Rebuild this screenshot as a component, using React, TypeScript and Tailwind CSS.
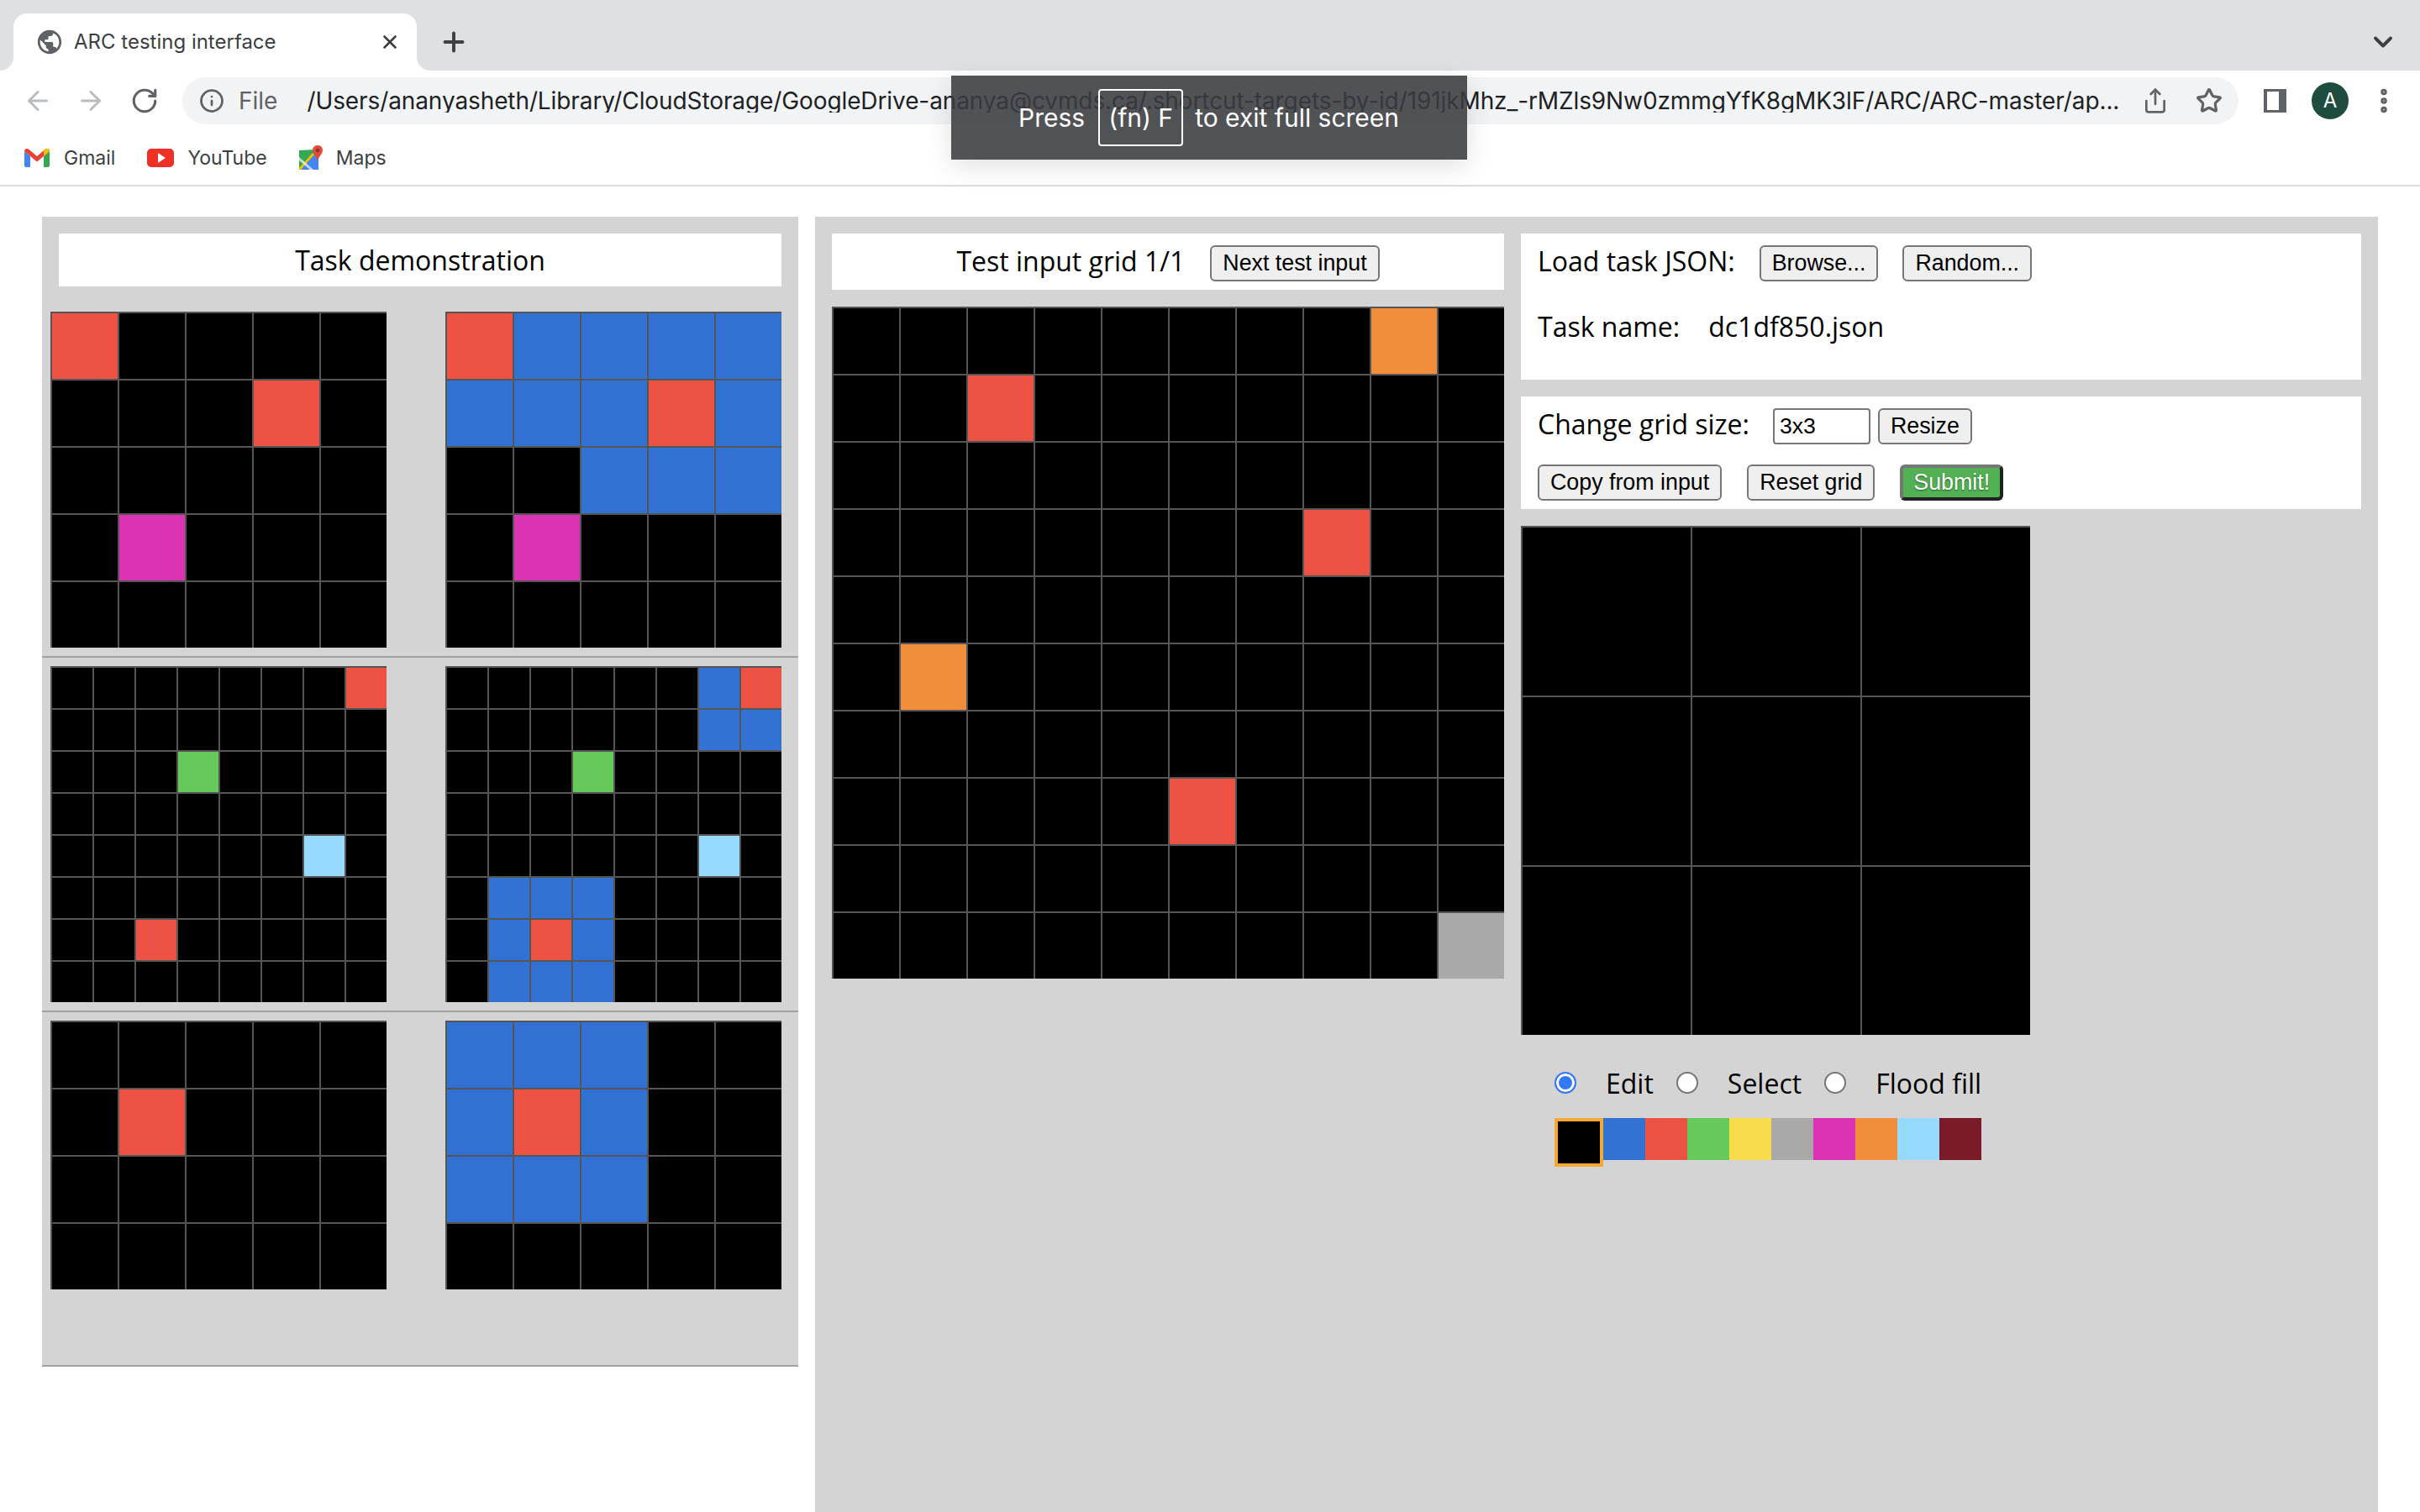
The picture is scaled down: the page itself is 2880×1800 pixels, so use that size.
import { ArrowLeft, ArrowRight, ChevronDown, EllipsisVertical, Info, Plus, RotateCw, Share, Star, X } from "lucide-react";
import { MdPublic } from "react-icons/md";

const cellColors = [
  "bg-black",
  "bg-[#3172d3]",
  "bg-[#ec5344]",
  "bg-[#66ca5a]",
  "bg-[#f9dc4c]",
  "bg-[#a9a9a9]",
  "bg-[#db33b4]",
  "bg-[#f28e3b]",
  "bg-[#96daff]",
  "bg-[#7b1b2a]"
];

const pairs = [
  {
    cols: "grid-cols-5",
    size: "h-[400px] grid-rows-5",
    input: ["20000", "00020", "00000", "06000", "00000"],
    output: ["21111", "11121", "00111", "06000", "00000"]
  },
  {
    cols: "grid-cols-8",
    size: "h-[400px] grid-rows-8",
    input: ["00000002", "00000000", "00030000", "00000000", "00000080", "00000000", "00200000", "00000000"],
    output: ["00000012", "00000011", "00030000", "00000000", "00000080", "01110000", "01210000", "01110000"]
  },
  {
    cols: "grid-cols-5",
    size: "h-[320px] grid-rows-4",
    input: ["00000", "02000", "00000", "00000"],
    output: ["11100", "12100", "11100", "00000"]
  }
];

const testInput = [
  "0000000070",
  "0020000000",
  "0000000000",
  "0000000200",
  "0000000000",
  "0700000000",
  "0000000000",
  "0000020000",
  "0000000000",
  "0000000005"
];

function Grid({ rows, cols, size }: { rows: string[]; cols: string; size: string }) {
  return (
    <div className={`grid ${cols} ${size}`}>
      {rows.flatMap((row, r) =>
        row.split("").map((v, c) => (
          <div key={`${r}-${c}`} className={`border-t-2 border-l-2 border-[#555] ${cellColors[Number(v)]}`} />
        ))
      )}
    </div>
  );
}

function Btn({ label, className = "" }: { label: string; className?: string }) {
  return (
    <button className={`h-[43px] shrink-0 rounded-[6px] border-2 border-[#767676] bg-[#efefef] px-[13px] font-['Liberation_Sans',sans-serif] text-[26.8px] leading-none text-black ${className}`}>
      {label}
    </button>
  );
}

function GmailIcon() {
  return (
    <svg width="30" height="22" viewBox="0 0 30 22">
      <path d="M0 3 V20 a2 2 0 0 0 2 2 H7 V9 Z" fill="#4285f4" />
      <path d="M30 3 V20 a2 2 0 0 1 -2 2 H23 V9 Z" fill="#34a853" />
      <path d="M0 3 C0 0.5 3 -1 5 0.5 L15 9 L25 0.5 C27 -1 30 0.5 30 3 L23 9 L15 15.5 L7 9 Z" fill="#ea4335" />
      <path d="M23 9 V1 L25 0.5 C27 -1 30 0.5 30 3 Z" fill="#fbbc04" />
    </svg>
  );
}

function MapsIcon() {
  return (
    <svg width="30" height="30" viewBox="0 0 30 30">
      <path d="M1 6 L20 5 V29 H1 Z" fill="#34a853" />
      <path d="M1 29 L20 10 L24 14 V29 Z" fill="#4285f4" />
      <path d="M1 27 L17 9 L19 11 L3 29 H1 Z" fill="#fbbc04" />
      <path d="M14 29 L1 18 V14 L18 29 Z" fill="#ffffff" opacity="0.7" />
      <path d="M23 0 C19 0 17 3 17 6 C17 10 21 12 23 19 C25 12 29 10 29 6 C29 3 27 0 23 0 Z" fill="#dd4b3e" />
      <circle cx="23" cy="6" r="2.2" fill="#962b22" />
    </svg>
  );
}

function Radio({ checked = false }: { checked?: boolean }) {
  return (
    <input
      type="radio"
      name="tool"
      defaultChecked={checked}
      className="m-0 h-[26px] w-[26px] shrink-0 appearance-none rounded-full border-2 border-[#767676] bg-white checked:border-[#3478f6] checked:bg-[#3478f6] checked:shadow-[inset_0_0_0_3px_#ffffff]"
    />
  );
}

export default function App() {
  return (
    <div className="relative h-[1800px] w-[2880px] overflow-hidden bg-white font-['Open_Sans',sans-serif] text-black">
      {/* browser chrome */}
      <div className="flex h-[84px] items-end bg-[#dfe0e4] pl-4 font-['Inter',sans-serif]">
        <div className="relative flex h-[68px] w-[480px] items-center rounded-t-[16px] bg-white pl-[26px] text-[#3c4043]">
          <span className="absolute bottom-0 left-[-16px] h-4 w-4 bg-white">
            <span className="block h-full w-full rounded-br-[16px] bg-[#dfe0e4]" />
          </span>
          <span className="absolute bottom-0 right-[-16px] h-4 w-4 bg-white">
            <span className="block h-full w-full rounded-bl-[16px] bg-[#dfe0e4]" />
          </span>
          <MdPublic size={34} className="shrink-0 text-[#5f6368]" />
          <span className="ml-[12px] text-[24px] leading-none">ARC testing interface</span>
          <X size={26} strokeWidth={2.4} className="ml-auto mr-[19px] text-[#3c4043]" />
        </div>
        <div className="ml-[26px] flex h-[68px] items-center">
          <Plus size={36} strokeWidth={2.6} className="text-[#3c4043]" />
        </div>
        <div className="ml-auto mr-[26px] flex h-[68px] items-center">
          <ChevronDown size={36} strokeWidth={2.6} className="text-[#3c4043]" />
        </div>
      </div>

      <div className="flex h-[72px] items-center font-['Inter',sans-serif]">
        <ArrowLeft size={36} strokeWidth={2} className="ml-[27px] text-[#b9bcc0]" />
        <ArrowRight size={36} strokeWidth={2} className="ml-[27px] text-[#b9bcc0]" />
        <RotateCw size={34} strokeWidth={2.2} className="ml-[29px] text-[#5f6368]" />
        <div className="ml-[28px] flex h-[56px] w-[2447px] items-center rounded-full bg-[#f1f3f4] pl-[20px] pr-[24px]">
          <Info size={30} strokeWidth={2.2} className="shrink-0 text-[#5f6368]" />
          <span className="ml-[17px] text-[28px] leading-none text-[#5f6368]">File</span>
          <span className="ml-[17px] h-[32px] w-[2px] bg-[#9aa0a6]" />
          <span className="ml-[18px] w-[2156px] shrink-0 overflow-hidden whitespace-nowrap text-[28px] leading-none tracking-[-0.1px] text-[#202124]">
            /Users/ananyasheth/Library/CloudStorage/GoogleDrive-ananya@cvmds.ca/.shortcut-targets-by-id/191jkMhz_-rMZls9Nw0zmmgYfK8gMK3lF/ARC/ARC-master/ap...
          </span>
          <Share size={32} strokeWidth={2} className="ml-[28px] shrink-0 text-[#5f6368]" />
          <Star size={32} strokeWidth={2.4} className="ml-[32px] shrink-0 text-[#5f6368]" />
        </div>
        <svg width="27" height="28" viewBox="0 0 27 28" className="ml-[30px] shrink-0">
          <rect width="27" height="28" fill="#5f6368" />
          <rect x="4" y="3" width="14" height="22" fill="#fff" />
        </svg>
        <div className="ml-[30px] flex h-[44px] w-[44px] shrink-0 items-center justify-center rounded-full bg-[#1e4d3f] text-[24px] leading-none text-white">
          A
        </div>
        <EllipsisVertical size={36} strokeWidth={3} className="ml-[24px] shrink-0 text-[#5f6368]" />
      </div>

      <div className="flex h-[64px] items-center pl-[29px] font-['Inter',sans-serif] text-[23px] leading-none text-[#3c4043]">
        <GmailIcon />
        <span className="ml-[17px]">Gmail</span>
        <span className="ml-[38px] flex h-[22px] w-[32px] items-center justify-center rounded-[5px] bg-[#ee3124]">
          <span className="ml-[2px] h-0 w-0 border-y-[6px] border-l-[9px] border-y-transparent border-l-white" />
        </span>
        <span className="ml-[16px]">YouTube</span>
        <span className="ml-[37px] flex">
          <MapsIcon />
        </span>
        <span className="ml-[15px]">Maps</span>
      </div>
      <div className="h-[2px] bg-[#dadce0]" />

      {/* page */}
      <div className="flex pt-[36px]">
        <div className="ml-[50px] h-[1369px] w-[900px] bg-[#d4d4d4] pt-[20px]">
          <div className="ml-[20px] flex h-[63px] w-[860px] items-center justify-center bg-white text-[32px] leading-none">
            Task demonstration
          </div>
          <div className="mt-[20px]">
            {pairs.map((p, i) => (
              <div
                key={i}
                className={`flex gap-[70px] border-b-2 border-[#a0a0a0] pl-[10px] pr-[20px] pt-[10px] ${i === 2 ? "pb-[90px]" : "pb-[10px]"}`}
              >
                <div className="w-[400px]">
                  <Grid rows={p.input} cols={p.cols} size={p.size} />
                </div>
                <div className="w-[400px]">
                  <Grid rows={p.output} cols={p.cols} size={p.size} />
                </div>
              </div>
            ))}
          </div>
        </div>

        <div className="ml-[20px] flex h-[1542px] w-[1860px] gap-[20px] bg-[#d4d4d4] pl-[20px] pt-[20px]">
          <div className="w-[800px]">
            <div className="flex h-[67px] items-center justify-center gap-[30px] bg-white text-[32px] leading-none">
              <span className="mt-[-2px]">Test input grid 1/1</span>
              <Btn label="Next test input" className="mt-[3px]" />
            </div>
            <div className="mt-[20px]">
              <Grid rows={testInput} cols="grid-cols-10" size="h-[800px] grid-rows-10" />
            </div>
          </div>

          <div className="w-[1000px]">
            <div className="h-[174px] bg-white px-[20px] pt-[14px] text-[32px] leading-none">
              <div className="flex h-[43px] items-center">
                <span className="mt-[-6px]">Load task JSON:</span>
                <Btn label="Browse..." className="ml-[29px]" />
                <Btn label="Random..." className="ml-[29px]" />
              </div>
              <div className="mt-[38px] flex">
                <span>Task name:</span>
                <span className="ml-[34px]">dc1df850.json</span>
              </div>
            </div>

            <div className="mt-[20px] h-[134px] bg-white px-[20px] pt-[14px] text-[32px] leading-none">
              <div className="flex h-[43px] items-center">
                <span className="mt-[-6px]">Change grid size:</span>
                <input
                  defaultValue="3x3"
                  className="ml-[28px] h-[43px] w-[116px] rounded-[4px] border-2 border-[#767676] bg-white px-[6px] font-['Liberation_Sans',sans-serif] text-[26.67px] leading-none"
                />
                <Btn label="Resize" className="ml-[9px]" />
              </div>
              <div className="mt-[24px] flex">
                <Btn label="Copy from input" />
                <Btn label="Reset grid" className="ml-[30px]" />
                <button className="ml-[30px] h-[43px] rounded-[6px] border-4 border-t-[#767676] border-l-[#767676] border-r-[#222] border-b-[#222] bg-[#52b153] px-[12px] font-['Liberation_Sans',sans-serif] text-[26.8px] leading-none text-white [text-shadow:0_1px_2px_rgba(0,0,0,0.5)]">
                  Submit!
                </button>
              </div>
            </div>

            <div className="mt-[20px] w-[606px]">
              <Grid rows={["000", "000", "000"]} cols="grid-cols-3" size="h-[606px] grid-rows-3" />
            </div>

            <div className="ml-[40px] mt-[44px] flex h-[26px] items-center text-[32px] leading-none">
              <Radio checked />
              <span className="ml-[35px] mt-[2px]">Edit</span>
              <span className="ml-[27px] flex"><Radio /></span>
              <span className="ml-[35px] mt-[2px]">Select</span>
              <span className="ml-[27px] flex"><Radio /></span>
              <span className="ml-[35px] mt-[2px]">Flood fill</span>
            </div>

            <div className="ml-[40px] mt-[29px] flex items-start">
              <div className="h-[58px] w-[58px] border-4 border-[#f5a833] bg-black" />
              {cellColors.slice(1).map((c) => (
                <div key={c} className={`h-[50px] w-[50px] ${c}`} />
              ))}
            </div>
          </div>
        </div>
      </div>

      {/* fullscreen hint */}
      <div className="absolute left-[1132px] top-[90px] flex h-[100px] w-[614px] items-center bg-[rgba(58,59,64,0.88)] pl-[80px] font-['Inter',sans-serif] text-[30px] leading-none text-white shadow-[0_8px_30px_rgba(0,0,0,0.12)]">
        <span>Press</span>
        <span className="ml-[16px] flex h-[68px] w-[101px] items-center justify-center rounded-[4px] border-2 border-white">(fn) F</span>
        <span className="ml-[14px]">to exit full screen</span>
      </div>
    </div>
  );
}
